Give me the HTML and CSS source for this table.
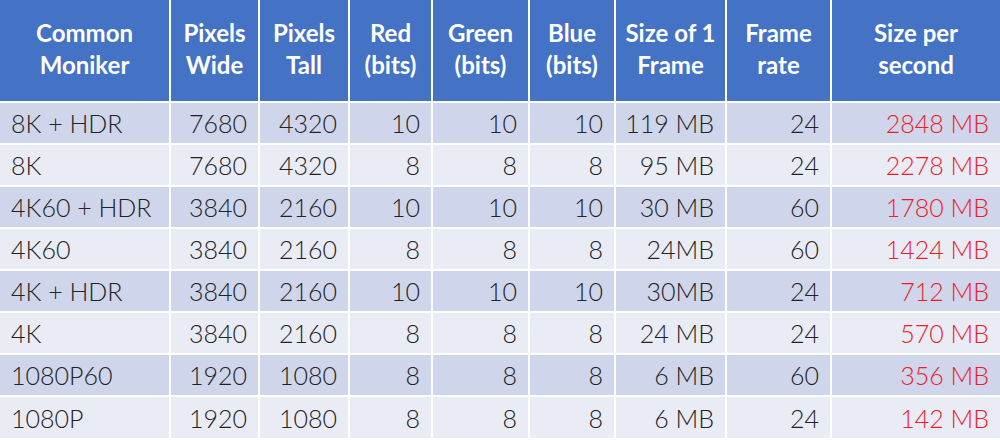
FILE: index.html
```html
<!DOCTYPE html>
<html>
<head>
<meta charset="utf-8">
<link rel="stylesheet" href="styles.css">
</head>
<body>
<div class="table">
  <div class="row head">
    <div class="c">Common<br>Moniker</div>
    <div class="c">Pixels<br>Wide</div>
    <div class="c">Pixels<br>Tall</div>
    <div class="c">Red<br>(bits)</div>
    <div class="c">Green<br>(bits)</div>
    <div class="c">Blue<br>(bits)</div>
    <div class="c">Size of 1<br>Frame</div>
    <div class="c">Frame<br>rate</div>
    <div class="c">Size per<br>second</div>
  </div>
  <div class="row odd">
    <div class="c name">8K + HDR</div><div class="c">7680</div><div class="c">4320</div><div class="c">10</div><div class="c">10</div><div class="c">10</div><div class="c">119 MB</div><div class="c">24</div><div class="c red">2848 MB</div>
  </div>
  <div class="row even">
    <div class="c name">8K</div><div class="c">7680</div><div class="c">4320</div><div class="c">8</div><div class="c">8</div><div class="c">8</div><div class="c">95 MB</div><div class="c">24</div><div class="c red">2278 MB</div>
  </div>
  <div class="row odd">
    <div class="c name">4K60 + HDR</div><div class="c">3840</div><div class="c">2160</div><div class="c">10</div><div class="c">10</div><div class="c">10</div><div class="c">30 MB</div><div class="c">60</div><div class="c red">1780 MB</div>
  </div>
  <div class="row even">
    <div class="c name">4K60</div><div class="c">3840</div><div class="c">2160</div><div class="c">8</div><div class="c">8</div><div class="c">8</div><div class="c">24MB</div><div class="c">60</div><div class="c red">1424 MB</div>
  </div>
  <div class="row odd">
    <div class="c name">4K + HDR</div><div class="c">3840</div><div class="c">2160</div><div class="c">10</div><div class="c">10</div><div class="c">10</div><div class="c">30MB</div><div class="c">24</div><div class="c red">712 MB</div>
  </div>
  <div class="row even">
    <div class="c name">4K</div><div class="c">3840</div><div class="c">2160</div><div class="c">8</div><div class="c">8</div><div class="c">8</div><div class="c">24 MB</div><div class="c">24</div><div class="c red">570 MB</div>
  </div>
  <div class="row odd">
    <div class="c name">1080P60</div><div class="c">1920</div><div class="c">1080</div><div class="c">8</div><div class="c">8</div><div class="c">8</div><div class="c">6 MB</div><div class="c">60</div><div class="c red">356 MB</div>
  </div>
  <div class="row even">
    <div class="c name">1080P</div><div class="c">1920</div><div class="c">1080</div><div class="c">8</div><div class="c">8</div><div class="c">8</div><div class="c">6 MB</div><div class="c">24</div><div class="c red">142 MB</div>
  </div>
</div>
</body>
</html>
```
FILE: styles.css
```css
html, body {
  margin: 0;
  padding: 0;
  background: #ffffff;
}
.table {
  display: grid;
  width: 1000px;
  height: 440px;
  grid-template-columns: 169px 87px 88px 81px 95px 84px 109px 103px 168px;
  grid-template-rows: 101px repeat(7, 40px) 41px;
  column-gap: 2px;
  row-gap: 2px;
  background: #ffffff;
  font-family: Lato, "Liberation Sans", sans-serif;
  overflow: hidden;
}
.row {
  display: contents;
}
.c {
  display: flex;
  align-items: center;
  justify-content: flex-end;
  padding: 0 11px;
  font-size: 25px;
  font-weight: 300;
  color: #222222;
  white-space: nowrap;
}
.row.head .c {
  background: #4472c4;
  color: #ffffff;
  font-weight: 700;
  font-size: 24px;
  line-height: 32px;
  justify-content: center;
  text-align: center;
  padding: 0 4px 4px;
}
.row.head {
}
.odd .c { background: #cfd5ea; }
.even .c { background: #e9ebf5; }
.c.name { justify-content: flex-start; }
.c.red { color: #ee1c25; }
```
